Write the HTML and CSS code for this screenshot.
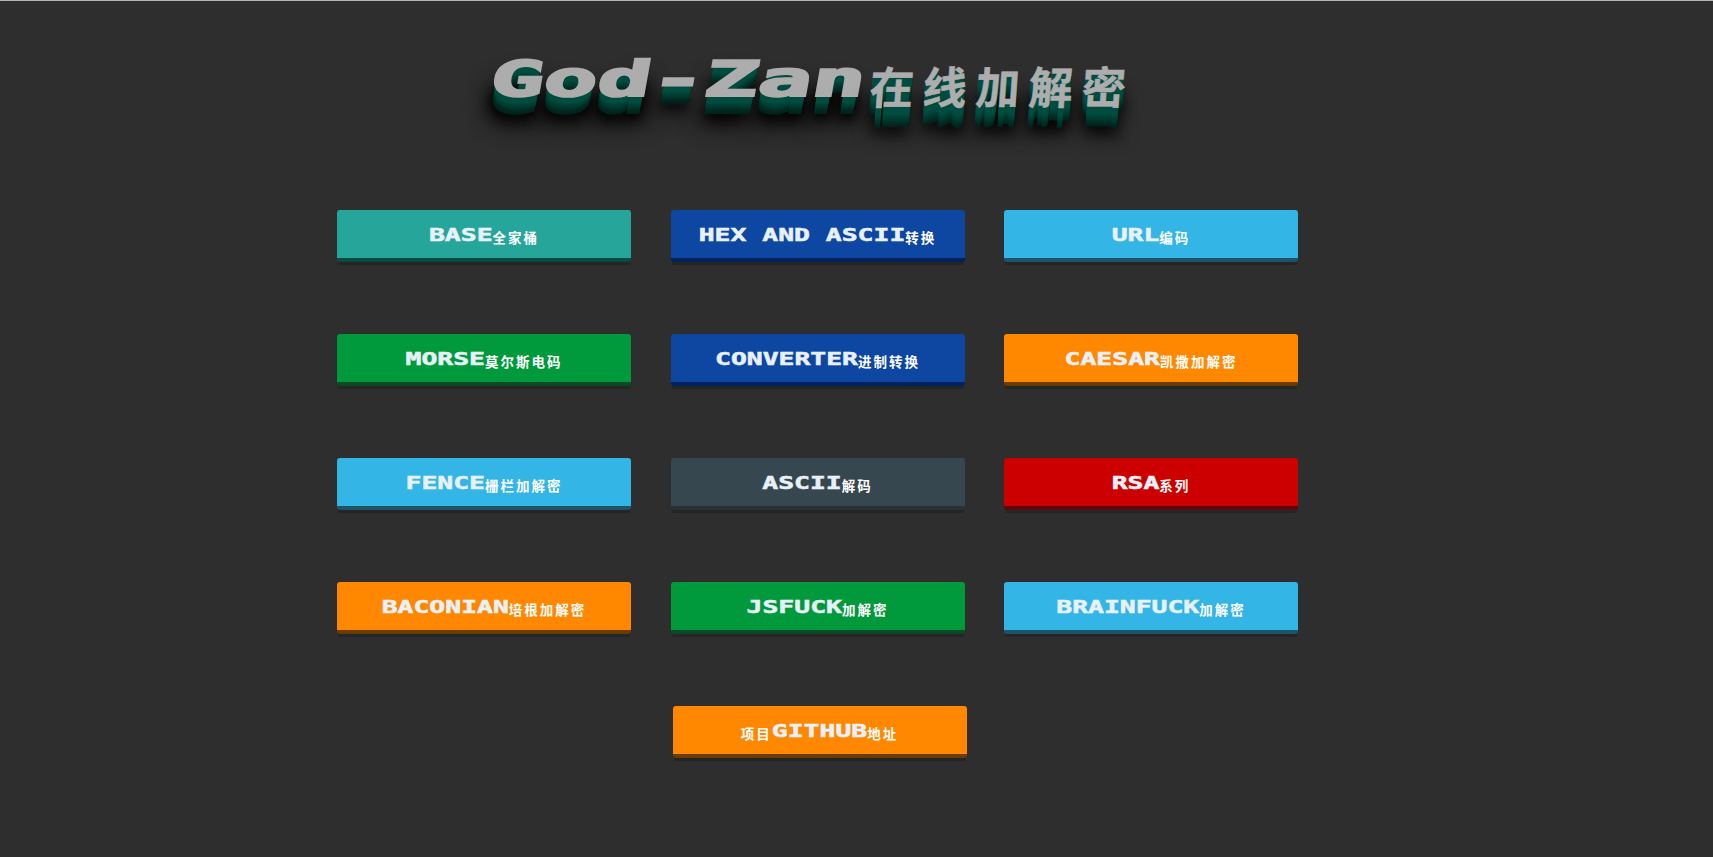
FILE: index.html
```html
<!DOCTYPE html>
<html lang="zh">
<head>
  <meta charset="UTF-8" />
  <title>God-Zan在线加解密</title>
  <link rel="stylesheet" href="styles.css">
</head>
<body>
  <header class="titulo">
    <h1><span class="latin">God-Zan</span><span class="cjk">在线加解密</span></h1>
  </header>

  <main class="botones">
    <a class="btn teal"><span class="latin">BASE</span><span class="cjk">全家桶</span></a>
    <a class="btn blue"><span class="latin">HEX AND ASCII</span><span class="cjk">转换</span></a>
    <a class="btn sky"><span class="latin">URL</span><span class="cjk">编码</span></a>

    <a class="btn green"><span class="latin">MORSE</span><span class="cjk">莫尔斯电码</span></a>
    <a class="btn blue"><span class="latin">CONVERTER</span><span class="cjk">进制转换</span></a>
    <a class="btn orange"><span class="latin">CAESAR</span><span class="cjk">凯撒加解密</span></a>

    <a class="btn sky"><span class="latin">FENCE</span><span class="cjk">栅栏加解密</span></a>
    <a class="btn slate"><span class="latin">ASCII</span><span class="cjk">解码</span></a>
    <a class="btn red"><span class="latin">RSA</span><span class="cjk">系列</span></a>

    <a class="btn orange"><span class="latin">BACONIAN</span><span class="cjk">培根加解密</span></a>
    <a class="btn green"><span class="latin">JSFUCK</span><span class="cjk">加解密</span></a>
    <a class="btn sky"><span class="latin">BRAINFUCK</span><span class="cjk">加解密</span></a>

    <a class="btn orange github"><span class="cjk">项目</span><span class="latin">GITHUB</span><span class="cjk">地址</span></a>
  </main>
</body>
</html>
```

FILE: styles.css
```css
html, body {
  height: 100%;
}

body {
  margin: 0;
  box-sizing: border-box;
  border-top: 1px solid #b5b5b5;
  background-color: #2e2e2e;
  color: #e8f0f8;
  font-family: "DejaVu Sans Mono", "Noto Sans CJK SC", monospace;
  overflow: hidden;
}

.titulo {
  height: 209px;
  padding-left: 495px;
}

h1 {
  display: flex;
  align-items: flex-start;
  margin: 0;
  padding-top: 28px;
  font-weight: bold;
  color: #adadad;
}

h1 .latin {
  display: block;
  font-size: 89px;
  line-height: 100px;
  -webkit-text-stroke: 4px #adadad;
  transform: translateX(-4px) skewX(-10deg) scaleY(0.55);
  transform-origin: 0 50%;
  text-shadow:
    0 3px 0 #004d40, 0 6px 0 #004d40, 0 9px 0 #004d40, 0 12px 0 #004d40,
    0 15px 0 #00463a, 0 18px 0 #003f34, 0 21px 0 #00382e, 0 24px 0 #003128,
    0 27px 0 #002a22, 0 30px 0 #00251e, 0 33px 0 #00221b,
    0 40px 16px #000, 0 44px 28px #000, 0 44px 36px #000;
}

h1 .cjk {
  display: block;
  margin-left: 0;
  margin-top: 26px;
  font-family: "Noto Sans CJK SC", sans-serif;
  font-size: 44px;
  line-height: 60px;
  letter-spacing: 9px;
  font-weight: bold;
  -webkit-text-stroke: 0.5px #adadad;
  transform: skewX(-4deg);
  text-shadow:
    0 2px 0 #004d40, 0 4px 0 #004d40, 0 6px 0 #004d40, 0 8px 0 #004d40,
    0 10px 0 #00463a, 0 12px 0 #003f34, 0 14px 0 #00382e, 0 16px 0 #003128,
    0 18px 0 #002a22, 0 20px 0 #00251e,
    0 26px 14px #000, 0 26px 20px #000;
}

.botones {
  display: grid;
  grid-template-columns: repeat(3, 294px);
  grid-auto-rows: 52px;
  column-gap: 39.5px;
  row-gap: 72px;
  margin-left: 337px;
  width: 961px;
}

.btn {
  display: flex;
  justify-content: center;
  align-items: center;
  box-sizing: border-box;
  border-radius: 3px;
  border-bottom: 4px solid;
  box-shadow: 0 4px 0 -1px #252525;
}

.btn .latin {
  display: block;
  margin-top: 1px;
  font-size: 26.4px;
  line-height: 30px;
  font-weight: bold;
  white-space: pre;
  -webkit-text-stroke: 0.8px currentColor;
  transform: scaleY(0.7);
}

.btn .cjk {
  margin-top: 5px;
  font-family: "Noto Sans CJK SC", sans-serif;
  font-size: 13.5px;
  font-weight: bold;
  letter-spacing: 2px;
  color: #fff;
}

.github {
  grid-column: 2;
  width: 294px;
  margin-left: 2px;
}

.teal { background: #26a69a; border-color: #0b4a42; }
.blue { background: #0d47a1; border-color: #00235f; }
.sky { background: #33b5e5; border-color: #1d5468; }
.green { background: #009a3d; border-color: #0a4a25; }
.orange { background: #ff8800; border-color: #6a3c00; }
.slate { background: #37474f; border-color: #263238; }
.red { background: #cc0000; border-color: #5c0808; }
```
